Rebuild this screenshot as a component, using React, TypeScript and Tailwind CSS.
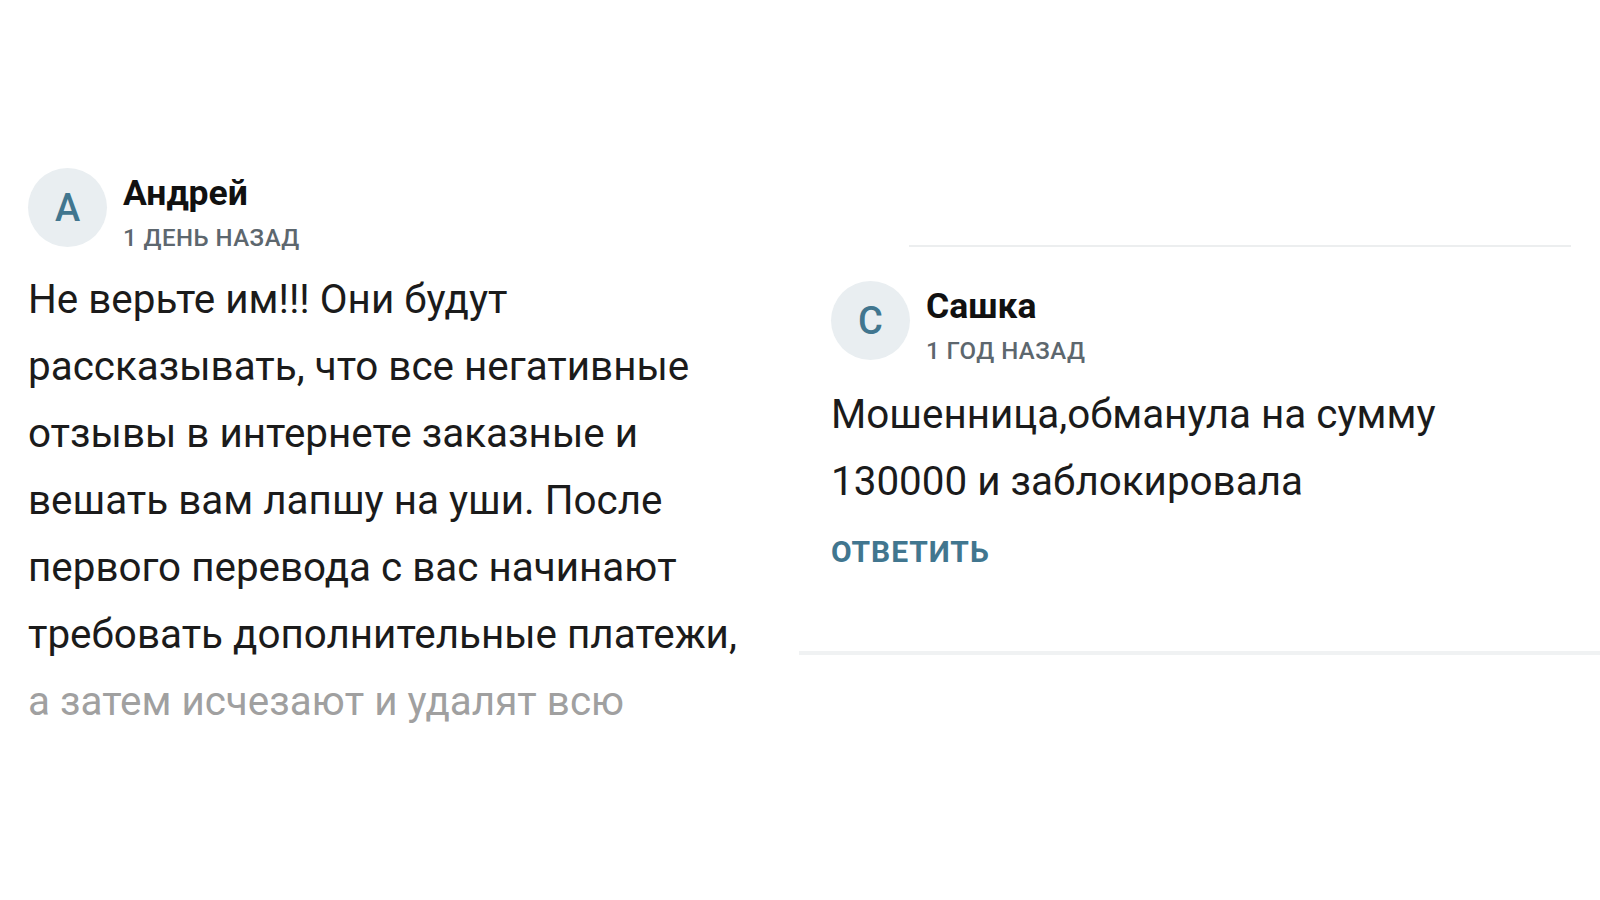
const font = "font-['Roboto','Liberation_Sans',sans-serif]"

function Avatar({ letter }: { letter: string }) {
  return (
    <div className="w-[79px] h-[79px] shrink-0 rounded-full bg-[#e9eef1] flex items-center justify-center">
      <span className="text-[38px] leading-none font-medium text-[#41768f]">{letter}</span>
    </div>
  )
}

function Header({ letter, name, time }: { letter: string; name: string; time: string }) {
  return (
    <div className="flex items-start">
      <Avatar letter={letter} />
      <div className="ml-[16px] pt-[5px] flex flex-col">
        <div className="text-[35.5px] leading-[40px] font-bold text-[#111111]">{name}</div>
        <div className="mt-[9px] text-[24px] leading-[32px] font-medium tracking-[0.02em] text-[#5d676e]">{time}</div>
      </div>
    </div>
  )
}

const leftLines = [
  'Не верьте им!!! Они будут',
  'рассказывать, что все негативные',
  'отзывы в интернете заказные и',
  'вешать вам лапшу на уши. После',
  'первого перевода с вас начинают',
  'требовать дополнительные платежи,',
]

export default function App() {
  return (
    <div className={`w-[1600px] h-[900px] bg-white flex ${font}`}>
      {/* left comment */}
      <div className="w-[799px] shrink-0 pl-[28px] pt-[168px]">
        <Header letter="А" name="Андрей" time="1 ДЕНЬ НАЗАД" />
        <div className="mt-[12px] text-[40.4px] leading-[67px] text-[#1b1b1b] whitespace-nowrap">
          {leftLines.map((l, i) => (
            <div key={i}>{l}</div>
          ))}
          <div className="text-[#a0a0a0]">а затем исчезают и удалят всю</div>
        </div>
      </div>

      {/* right comment */}
      <div className="flex-1 flex flex-col pt-[245px]">
        <div className="ml-[110px] mr-[29px] h-[2px] bg-[#eceeef]" />
        <div className="pl-[32px] pt-[34px] pb-[83px]">
          <Header letter="С" name="Сашка" time="1 ГОД НАЗАД" />
          <div className="mt-[14px] text-[40.4px] leading-[67px] text-[#1b1b1b] whitespace-nowrap">
            <div>Мошенница,обманула на сумму</div>
            <div>130000 и заблокировала</div>
          </div>
          <div className="mt-[21px] text-[30px] leading-[32px] font-bold tracking-[0.03em] text-[#41768f]">ОТВЕТИТЬ</div>
        </div>
        <div className="h-[4px] bg-[#f0f2f3]" />
      </div>
    </div>
  )
}
